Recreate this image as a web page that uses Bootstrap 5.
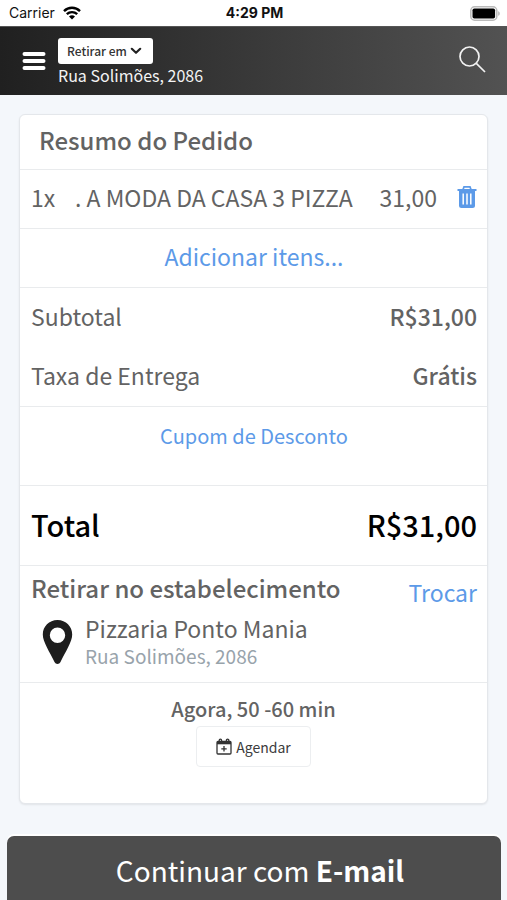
<!DOCTYPE html>
<html lang="pt-BR">
<head>
<meta charset="utf-8">
<meta name="viewport" content="width=device-width, initial-scale=1">
<title>Resumo do Pedido</title>
<link href="https://cdn.jsdelivr.net/npm/bootstrap@5.3.0/dist/css/bootstrap.min.css" rel="stylesheet">
<style>
  body { font-family: "Noto Sans CJK SC", "Noto Sans", sans-serif; background: #f4f7fb; color: #636363; font-size: 23px; line-height: 32px; }
  a { color: #5c9ae8; text-decoration: none; }
  .status-bar { height: 26px; font-family: Inter, "Liberation Sans", sans-serif; font-size: 14px; line-height: 26px; color: #111; padding: 0 7px 0 9px; }
  .status-bar > * { flex: 1 1 0; }
  .top-bar { height: 69px; background: linear-gradient(90deg, #202020, #525252); color: #f4f4f4; padding: 0 20px; gap: 10px; border-top: 1px solid #555; }
  .menu-btn, .search-btn, .trash-btn { border: 0; background: none; padding: 0; color: inherit; line-height: 0; }
  .pickup-btn { height: 26px; padding: 0 11px 0 9px; gap: 3px; font-size: 12px; line-height: 24px; font-weight: 500; color: #333; background: #fff; border: 0; border-radius: 3px; }
  .location { padding-top: 2px; }
  .address { font-size: 16px; line-height: 22px; }
  .order-card { margin: 19px 19px 0 19px; border: 1px solid #e4e7eb; border-radius: 6px; box-shadow: 0 1px 2px rgba(0,0,0,.08); }
  .order-row { padding: 0 10px 4px 11px; min-height: 59px; border-bottom: 1px solid #e9ebed; }
  .order-title { font-size: 24px; line-height: 50px; min-height: 55px; padding: 0 19px 4px; font-weight: 500; margin: 0; }
  .medium { font-weight: 500; }
  .item-qty { width: 44px; }
  .trash-btn { color: #5c9ae8; margin-left: 20px; }
  .fees { min-height: 118px; padding-bottom: 0; }
  .fees > div { height: 59px; padding-bottom: 4px; }
  .coupon { font-size: 20px; min-height: 79px; padding-top: 13px; }
  .total { font-size: 29px; min-height: 80px; color: #000; font-weight: 500; }
  .pickup { min-height: 117px; padding-top: 6px; padding-bottom: 0; }
  .pickup h2 { font-size: 24px; line-height: 32px; font-weight: 500; margin: 0; }
  .place { padding-left: 11px; gap: 12px; margin-top: 11px; }
  .place-name { line-height: 27px; }
  .place-address { font-size: 19px; line-height: 27px; color: #98a3ab; }
  .schedule { font-size: 20px; min-height: 120px; padding-top: 10px; gap: 1px; }
  .schedule-btn { height: 41px; padding: 0 19px; gap: 4px; font-size: 14px; color: #3c3c3c; background: #fff; border: 1px solid #eceef0; border-radius: 4px; }
  .footer-bar { padding: 0 6px 0 7px; }
  .continue-btn { min-height: 64px; padding: 4px 0 0 12px; font-size: 28px; color: #fff; background: #4d4d4d; border: 0; border-radius: 7px 7px 0 0; box-shadow: 0 -2px 0 #fff; }
</style>
</head>
<body class="min-vh-100 d-flex flex-column">
<div class="status-bar bg-white d-flex align-items-center">
  <div class="d-flex align-items-center gap-2"><span>Carrier</span>
    <svg width="18" height="14" viewBox="0 0 18 14" fill="none" stroke="#000" stroke-width="2.4" aria-hidden="true"><path d="M1 5.1C5.5.7 12.500.7 17 5.100M3.800 8.200c3-2.800 7.400-2.800 10.400 0"/><path d="M9 13.600 6 10.500c1.700-1.600 4.300-1.600 6 0z" fill="#000" stroke="none"/></svg>
  </div>
  <div class="text-center fw-bold">4:29 PM</div>
  <div class="d-flex justify-content-end">
    <svg width="30" height="15" viewBox="0 0 30 15" aria-hidden="true"><rect x=".8" y=".8" width="26" height="13.400" rx="3.800" fill="#fff" stroke="#bbb" stroke-width="1.500"/><rect x="2.500" y="2.500" width="22.600" height="10" rx="1.800"/><path d="M28.300 5.200c1.800.7 1.800 3.900 0 4.600z" fill="#aaa"/></svg>
  </div>
</div>
<header class="top-bar d-flex align-items-center">
  <button class="menu-btn" type="button" aria-label="Menu"><svg width="28" height="22" viewBox="0 0 28 22" stroke="#fff" stroke-width="4" stroke-linecap="round"><path d="M4.500 4h19M4.500 11h19M4.500 18h19"/></svg></button>
  <div class="location flex-grow-1">
    <button class="pickup-btn d-flex align-items-center" type="button">Retirar em
      <svg width="12" height="8" viewBox="0 0 12 8" fill="none" stroke="#222" stroke-width="2.200" stroke-linecap="round" stroke-linejoin="round"><path d="m1.800 1.800 4.200 4 4.200-4"/></svg></button>
    <div class="address">Rua Solimões, 2086</div>
  </div>
  <button class="search-btn" type="button" aria-label="Buscar"><svg width="30" height="30" viewBox="0 0 30 30" fill="none" stroke="#f2f2f2" stroke-width="1.700"><circle cx="12.500" cy="10.500" r="9.500"/><path d="m19.300 17.300 8.700 8.700"/></svg></button>
</header>
<main class="order-card bg-white">
  <h1 class="order-row order-title">Resumo do Pedido</h1>
  <div class="order-row d-flex align-items-center">
    <span class="item-qty">1x</span><span class="flex-grow-1">. A MODA DA CASA 3 PIZZA</span><span>31,00</span>
    <button class="trash-btn" type="button" aria-label="Remover"><svg width="20" height="24" viewBox="0 0 20 24" fill="none" stroke="currentColor"><path d="M.5 5h19" stroke-width="2"/><path d="M6 4.500 7 1.900h6l1 2.600" stroke-width="1.700"/><path d="M2 5h16v15.500a2.500 2.500 0 0 1-2.500 2.500h-11A2.500 2.500 0 0 1 2 20.500z" fill="currentColor" stroke="none"/><path d="M6.200 8.500v11M10 8.500v11M13.800 8.500v11" stroke="#fff" stroke-width="1.500"/></svg></button>
  </div>
  <div class="order-row d-flex align-items-center justify-content-center"><a href="#">Adicionar itens...</a></div>
  <div class="order-row fees">
    <div class="d-flex align-items-center justify-content-between"><span>Subtotal</span><span class="medium">R$31,00</span></div>
    <div class="d-flex align-items-center justify-content-between"><span>Taxa de Entrega</span><span class="medium">Grátis</span></div>
  </div>
  <div class="order-row coupon text-center"><a href="#">Cupom de Desconto</a></div>
  <div class="order-row total d-flex align-items-center justify-content-between"><span>Total</span><span>R$31,00</span></div>
  <section class="order-row pickup d-flex justify-content-between">
    <div>
      <h2>Retirar no estabelecimento</h2>
      <div class="place d-flex align-items-center">
        <svg width="31" height="46" viewBox="0 0 31 46" aria-hidden="true"><path fill="#1e1e1e" fill-rule="evenodd" d="M15.500 1C7 1 .8 7.500.8 15.500c0 7.500 7 17.500 11.700 27.500 1.200 2.500 4.800 2.500 6 0 4.700-10 11.700-20 11.700-27.500C30.200 7.500 24 1 15.500 1zm0 7.500a7.700 7.700 0 1 1 0 15.400 7.700 7.700 0 0 1 0-15.400z"/></svg>
        <div><div class="place-name">Pizzaria Ponto Mania</div><div class="place-address">Rua Solimões, 2086</div></div>
      </div>
    </div>
    <a class="mt-1" href="#">Trocar</a>
  </section>
  <section class="schedule d-flex flex-column align-items-center">
    <div class="medium">Agora, 50 -60 min</div>
    <button class="schedule-btn d-flex align-items-center" type="button"><svg width="16" height="17" viewBox="0 0 16 17" fill="none" stroke="#333" stroke-width="1.300"><rect x="1" y="3.500" width="14" height="12.500" rx="1"/><path d="M1 5h14" stroke-width="2.600"/><path d="M3.200 4V2.400a1.200 1.200 0 0 1 2.400 0V4M10.400 4V2.400a1.200 1.200 0 0 1 2.400 0V4M5.300 10.800h5.400M8 8.100v5.400"/></svg>Agendar</button>
  </section>
</main>
<footer class="footer-bar mt-auto"><button class="continue-btn w-100 d-block" type="button">Continuar com <span class="fw-bold">E-mail</span></button></footer>
<script src="https://cdn.jsdelivr.net/npm/bootstrap@5.3.0/dist/js/bootstrap.bundle.min.js"></script>
</body>
</html>
